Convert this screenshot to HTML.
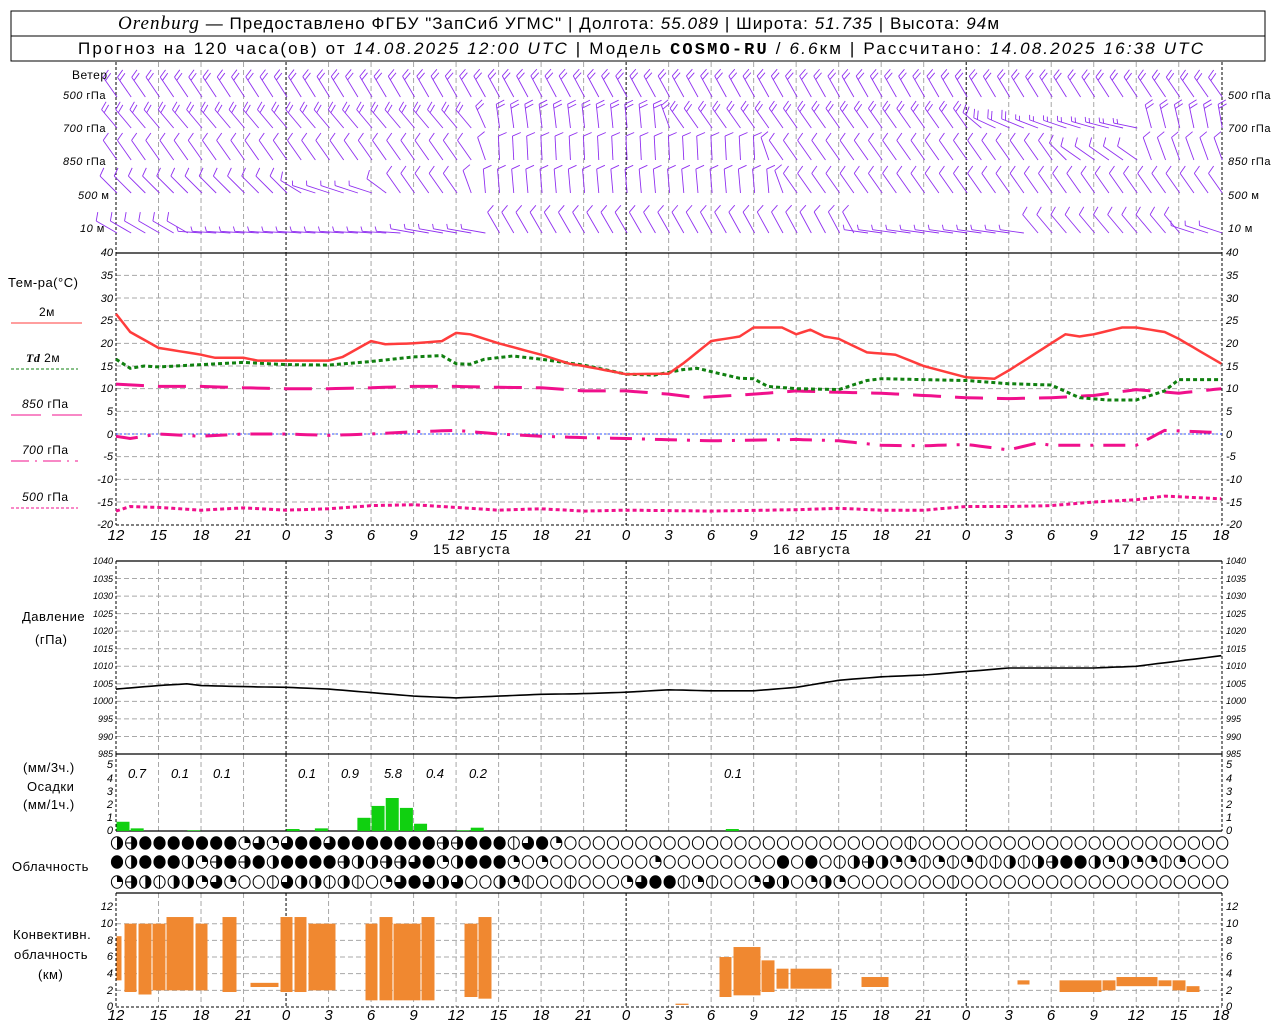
<!DOCTYPE html>
<html><head><meta charset="utf-8"><style>
html,body{margin:0;padding:0;background:#fff;width:1280px;height:1024px;overflow:hidden}
svg{display:block}
text{font-family:"Liberation Sans",sans-serif;fill:#000}
.h{font-size:17px;letter-spacing:1px}
.i{font-style:italic}
.s{font-size:12px;letter-spacing:0.5px}
.t{font-size:11px;font-style:italic}
.x{font-size:15px;font-style:italic;text-anchor:middle}
</style></head><body>
<svg id="g" width="1280" height="1024" viewBox="0 0 1280 1024" xmlns="http://www.w3.org/2000/svg">
<rect x="11" y="11" width="1254" height="50" fill="none" stroke="#000" stroke-width="1"/>
<line x1="11" y1="36" x2="1265" y2="36" stroke="#000"/>
<text class="h" x="118" y="29" textLength="882" lengthAdjust="spacing"><tspan font-family="Liberation Serif" font-style="italic" font-size="19">Orenburg</tspan> — Предоставлено ФГБУ "ЗапСиб УГМС" | Долгота: <tspan class="i">55.089</tspan> | Широта: <tspan class="i">51.735</tspan> | Высота: <tspan class="i">94</tspan>м</text>
<text class="h" x="78" y="54" font-size="16" textLength="1126" lengthAdjust="spacing">Прогноз на 120 часа(ов) от <tspan class="i">14.08.2025 12:00 UTC</tspan>  | Модель <tspan font-family="Liberation Mono" font-weight="bold">COSMO-RU</tspan> / <tspan class="i">6.6</tspan>км | Рассчитано: <tspan class="i">14.08.2025 16:38 UTC</tspan></text>
<g id="grid"></g>
<g id="data"></g>
<g class="s">
<text x="72" y="79">Ветер</text>
<text x="63" y="99" class="t">500 <tspan font-style="normal">гПа</tspan></text>
<text x="63" y="132" class="t">700 <tspan font-style="normal">гПа</tspan></text>
<text x="63" y="165" class="t">850 <tspan font-style="normal">гПа</tspan></text>
<text x="78" y="199" class="t">500 <tspan font-style="normal">м</tspan></text>
<text x="80" y="232" class="t">10  <tspan font-style="normal">  м</tspan></text>
<text x="1228" y="99" class="t">500 <tspan font-style="normal">гПа</tspan></text>
<text x="1228" y="132" class="t">700 <tspan font-style="normal">гПа</tspan></text>
<text x="1228" y="165" class="t">850 <tspan font-style="normal">гПа</tspan></text>
<text x="1228" y="199" class="t">500 <tspan font-style="normal">м</tspan></text>
<text x="1228" y="232" class="t">10  <tspan font-style="normal">  м</tspan></text>
<text x="8" y="287" style="font-size:13px">Тем-ра(°С)</text>
<text x="39" y="316">2м</text>
<text x="26" y="362"><tspan class="i" font-family="Liberation Serif" font-weight="bold">Td</tspan>  2м</text>
<text x="22" y="408"><tspan class="i">850</tspan> гПа</text>
<text x="22" y="454"><tspan class="i">700</tspan> гПа</text>
<text x="22" y="501"><tspan class="i">500</tspan> гПа</text>
<text x="22" y="621" style="font-size:13px">Давление</text>
<text x="35" y="644" style="font-size:13px">(гПа)</text>
<text x="23" y="772" style="font-size:13px">(мм/3ч.)</text>
<text x="27" y="791" style="font-size:13px">Осадки</text>
<text x="23" y="809" style="font-size:13px">(мм/1ч.)</text>
<text x="12" y="871" style="font-size:13px">Облачность</text>
<text x="13" y="939" style="font-size:13px">Конвективн.</text>
<text x="14" y="959" style="font-size:13px">облачность</text>
<text x="38" y="979" style="font-size:13px">(км)</text>
</g>
<g stroke-width="1">
<line x1="11" y1="323" x2="82" y2="323" stroke="#ff3c3c"/>
<line x1="11" y1="369" x2="78" y2="369" stroke="#108010" stroke-dasharray="3,2"/>
<line x1="11" y1="415" x2="41" y2="415" stroke="#f0108c"/><line x1="52" y1="415" x2="82" y2="415" stroke="#f0108c"/>
<line x1="11" y1="461" x2="78" y2="461" stroke="#f0108c" stroke-dasharray="18,6,2,6"/>
<line x1="11" y1="508" x2="78" y2="508" stroke="#f0108c" stroke-dasharray="3,2"/>
</g>
<g class="t" text-anchor="end">
<text x="113" y="256">40</text><text x="113" y="279">35</text><text x="113" y="302">30</text><text x="113" y="324">25</text><text x="113" y="347">20</text><text x="113" y="370">15</text><text x="113" y="392">10</text><text x="113" y="415">5</text><text x="113" y="438">0</text><text x="113" y="460">-5</text><text x="113" y="483">-10</text><text x="113" y="506">-15</text><text x="113" y="528">-20</text>
<text x="113" y="564" font-size="9">1040</text><text x="113" y="582" font-size="9">1035</text><text x="113" y="599" font-size="9">1030</text><text x="113" y="617" font-size="9">1025</text><text x="113" y="634" font-size="9">1020</text><text x="113" y="652" font-size="9">1015</text><text x="113" y="669" font-size="9">1010</text><text x="113" y="687" font-size="9">1005</text><text x="113" y="704" font-size="9">1000</text><text x="113" y="722" font-size="9">995</text><text x="113" y="740" font-size="9">990</text><text x="113" y="757" font-size="9">985</text>
<text x="113" y="768">5</text><text x="113" y="782">4</text><text x="113" y="795">3</text><text x="113" y="808">2</text><text x="113" y="821">1</text><text x="113" y="834">0</text>
<text x="113" y="910">12</text><text x="113" y="927">10</text><text x="113" y="944">8</text><text x="113" y="960">6</text><text x="113" y="977">4</text><text x="113" y="994">2</text><text x="113" y="1010">0</text>
</g>
<g class="t" text-anchor="start">
<text x="1226" y="256">40</text><text x="1226" y="279">35</text><text x="1226" y="302">30</text><text x="1226" y="324">25</text><text x="1226" y="347">20</text><text x="1226" y="370">15</text><text x="1226" y="392">10</text><text x="1226" y="415">5</text><text x="1226" y="438">0</text><text x="1226" y="460">-5</text><text x="1226" y="483">-10</text><text x="1226" y="506">-15</text><text x="1226" y="528">-20</text>
<text x="1226" y="564" font-size="9">1040</text><text x="1226" y="582" font-size="9">1035</text><text x="1226" y="599" font-size="9">1030</text><text x="1226" y="617" font-size="9">1025</text><text x="1226" y="634" font-size="9">1020</text><text x="1226" y="652" font-size="9">1015</text><text x="1226" y="669" font-size="9">1010</text><text x="1226" y="687" font-size="9">1005</text><text x="1226" y="704" font-size="9">1000</text><text x="1226" y="722" font-size="9">995</text><text x="1226" y="740" font-size="9">990</text><text x="1226" y="757" font-size="9">985</text>
<text x="1226" y="768">5</text><text x="1226" y="782">4</text><text x="1226" y="795">3</text><text x="1226" y="808">2</text><text x="1226" y="821">1</text><text x="1226" y="834">0</text>
<text x="1226" y="910">12</text><text x="1226" y="927">10</text><text x="1226" y="944">8</text><text x="1226" y="960">6</text><text x="1226" y="977">4</text><text x="1226" y="994">2</text><text x="1226" y="1010">0</text>
</g>
<g class="x">
<text x="116" y="540">12</text><text x="158.5" y="540">15</text><text x="201" y="540">18</text><text x="243.5" y="540">21</text><text x="286" y="540">0</text><text x="328.6" y="540">3</text><text x="371" y="540">6</text><text x="413.6" y="540">9</text><text x="456" y="540">12</text><text x="498.6" y="540">15</text><text x="541" y="540">18</text><text x="583.6" y="540">21</text><text x="626" y="540">0</text><text x="668.6" y="540">3</text><text x="711" y="540">6</text><text x="753.6" y="540">9</text><text x="796" y="540">12</text><text x="838.7" y="540">15</text><text x="881" y="540">18</text><text x="923.7" y="540">21</text><text x="966" y="540">0</text><text x="1008.7" y="540">3</text><text x="1051" y="540">6</text><text x="1093.7" y="540">9</text><text x="1136" y="540">12</text><text x="1178.7" y="540">15</text><text x="1221" y="540">18</text>
<text x="116" y="1020">12</text><text x="158.5" y="1020">15</text><text x="201" y="1020">18</text><text x="243.5" y="1020">21</text><text x="286" y="1020">0</text><text x="328.6" y="1020">3</text><text x="371" y="1020">6</text><text x="413.6" y="1020">9</text><text x="456" y="1020">12</text><text x="498.6" y="1020">15</text><text x="541" y="1020">18</text><text x="583.6" y="1020">21</text><text x="626" y="1020">0</text><text x="668.6" y="1020">3</text><text x="711" y="1020">6</text><text x="753.6" y="1020">9</text><text x="796" y="1020">12</text><text x="838.7" y="1020">15</text><text x="881" y="1020">18</text><text x="923.7" y="1020">21</text><text x="966" y="1020">0</text><text x="1008.7" y="1020">3</text><text x="1051" y="1020">6</text><text x="1093.7" y="1020">9</text><text x="1136" y="1020">12</text><text x="1178.7" y="1020">15</text><text x="1221" y="1020">18</text>
</g>
<g style="font-size:14px;letter-spacing:1px">
<text x="433" y="554">15  августа</text>
<text x="773" y="554">16  августа</text>
<text x="1113" y="554">17  августа</text>
</g>
<g class="i" font-size="13" text-anchor="middle">
<text x="137" y="778">0.7</text><text x="180" y="778">0.1</text><text x="222" y="778">0.1</text><text x="307" y="778">0.1</text><text x="350" y="778">0.9</text><text x="393" y="778">5.8</text><text x="435" y="778">0.4</text><text x="478" y="778">0.2</text><text x="733" y="778">0.1</text>
</g>
</svg>
<script>
(function(){
var NS="http://www.w3.org/2000/svg";
var grid=document.getElementById('grid'),data=document.getElementById('data');
function el(p,n,a){var e=document.createElementNS(NS,n);for(var k in a)e.setAttribute(k,a[k]);p.appendChild(e);return e;}
function X(h){return 116+14.17*h;}
var L=116,R=1222;
function hg(y){el(grid,'line',{x1:L,y1:y,x2:R,y2:y,stroke:'#a8a8a8','stroke-dasharray':'5,3'});}
for(var T=35;T>=-15;T-=5)hg(434-4.533*T);
for(var p=1035;p>=990;p-=5)hg(561+(1040-p)*3.509);
for(var k=10;k>=2;k-=2)hg(1007-8.33*k);
var panels=[[62,253],[253,525],[561,754],[754,831],[893,1007]];
for(var h=3;h<78;h+=3){var x=X(h),day=((12+h)%24==0);
 panels.forEach(function(pp){el(grid,'line',{x1:x,y1:pp[0],x2:x,y2:pp[1],stroke:day?'#000':'#a8a8a8','stroke-dasharray':day?'3,2':'5,3'});});}
[L,R].forEach(function(x){panels.forEach(function(pp){el(grid,'line',{x1:x,y1:pp[0],x2:x,y2:pp[1],stroke:'#000','stroke-dasharray':'3,2'});});});
[253,561,754,831,893].forEach(function(y){el(grid,'line',{x1:L,y1:y,x2:R,y2:y,stroke:'#000','stroke-width':1.2});});
el(grid,'line',{x1:L,y1:525,x2:R,y2:525,stroke:'#000','stroke-dasharray':'3,2'});
el(grid,'line',{x1:L,y1:1007,x2:R,y2:1007,stroke:'#000','stroke-dasharray':'3,2'});
el(grid,'line',{x1:L,y1:434,x2:R,y2:434,stroke:'#3050ff','stroke-dasharray':'2,2'});
function interp(pts,h){for(var i=0;i<pts.length-1;i++){if(h<=pts[i+1][0]){var a=pts[i],b=pts[i+1];return a[1]+(b[1]-a[1])*(h-a[0])/(b[0]-a[0]);}}return pts[pts.length-1][1];}
function curve(pts,fy,attrs){var d='';for(var h=0;h<=78;h+=0.5){d+=(h?'L':'M')+X(h).toFixed(1)+','+fy(interp(pts,h)).toFixed(1);}attrs.d=d;attrs.fill='none';el(data,'path',attrs);}
function ty(t){return 434-4.533*t;}
var T2=[[0,26.5],[1,22.5],[3,19],[6,17.5],[7,16.8],[9,16.8],[10,16.2],[15,16.2],[16,17],[18,20.5],[19,19.8],[21,20],[23,20.5],[24,22.3],[25,22],[27,20],[30,17.5],[32,15.5],[33,15],[36,13.2],[39,13.3],[40,15.5],[42,20.5],[44,21.5],[45,23.5],[47,23.5],[48,22],[49,23],[50,21.5],[51,21],[53,18],[55,17.5],[57,15],[60,12.5],[62,12.2],[63,14],[66,20],[67,22],[68,21.5],[69,22],[71,23.5],[72,23.5],[74,22.5],[75,21],[78,15.5]];
var TD=[[0,16.5],[1,14.5],[2,15],[3,14.8],[6,15.3],[9,15.8],[12,15.3],[15,15.2],[18,16],[21,17],[23,17.3],[24,15.5],[25,15.4],[26,16.5],[28,17.2],[30,16.5],[33,15.2],[36,13.2],[38,13],[40,14.2],[41,14.5],[44,12.3],[45,12.2],[46,10.5],[48,10],[51,9.8],[53,11.8],[54,12.2],[60,11.8],[63,11.1],[66,10.8],[68,8],[70,7.5],[72,7.5],[74,9.5],[75,12],[78,12]];
var T8=[[0,11],[3,10.5],[6,10.5],[9,10.2],[12,10],[15,10],[18,10.2],[21,10.5],[24,10.5],[27,10.3],[30,10.2],[33,9.5],[36,9.5],[39,8.8],[41,8],[45,8.8],[48,9.5],[51,9.2],[54,9],[57,8.5],[60,8],[63,7.8],[66,8],[69,8.5],[72,9.8],[75,9],[78,10]];
var T7=[[0,-0.5],[1,-1],[3,0],[6,-0.5],[9,0],[12,0],[15,-0.3],[18,0],[21,0.5],[24,0.8],[27,0],[30,-0.5],[33,-0.8],[36,-1],[42,-1.5],[48,-1.2],[51,-1.5],[54,-2.5],[57,-2.6],[60,-2.3],[63,-3.5],[65,-2],[66,-2.5],[69,-2.5],[72,-2.5],[74,0.8],[78,0.3]];
var T5=[[0,-17],[1,-16],[3,-16.2],[6,-16.8],[9,-16.3],[12,-16.8],[15,-16.5],[18,-15.8],[21,-15.6],[24,-16.2],[27,-16.8],[30,-16.5],[33,-17],[36,-16.8],[42,-17],[48,-16.7],[51,-16.4],[54,-16.8],[57,-16.8],[60,-16],[63,-16],[66,-15.8],[69,-15],[72,-14.5],[74,-13.7],[78,-14.3]];
curve(T5,ty,{stroke:'#f0108c','stroke-width':3,'stroke-dasharray':'4,3'});
curve(T7,ty,{stroke:'#f0108c','stroke-width':3,'stroke-dasharray':'22,10,3,10'});
curve(T8,ty,{stroke:'#f0108c','stroke-width':3,'stroke-dasharray':'28,14'});
curve(TD,ty,{stroke:'#108010','stroke-width':3,'stroke-dasharray':'4,3'});
curve(T2,ty,{stroke:'#ff3c3c','stroke-width':2.5});
var P=[[0,1003.5],[3,1004.5],[5,1005],[6,1004.5],[9,1004.2],[12,1004],[15,1003.5],[18,1002.5],[21,1001.5],[24,1001],[27,1001.5],[30,1002],[33,1002.2],[36,1002.6],[39,1003.3],[42,1003],[45,1003],[48,1004],[51,1006],[54,1007],[57,1007.5],[60,1008.5],[63,1009.5],[66,1009.5],[69,1009.5],[72,1010],[75,1011.5],[78,1013]];
curve(P,function(p){return 561+(1040-p)*3.509;},{stroke:'#000','stroke-width':1.6});
var pr=[[0,0.7],[1,0.2],[5,0.05],[12,0.15],[14,0.2],[17,1.0],[18,1.9],[19,2.5],[20,1.75],[21,0.55],[24,0.05],[25,0.25],[43,0.15]];
pr.forEach(function(b){var hgt=b[1]*13.2;el(data,'rect',{x:X(b[0])+0.5,y:831-hgt,width:13,height:hgt,fill:'#10d010'});});
var cv=[[116,122,3.2,8.5],[124,137,1.8,10],[138,152,1.5,10],[152,166,2,10],[166,194,2,10.8],[195,208,2,10],[222,237,1.8,10.8],[250,279,2.4,2.9],[280,293,1.8,10.8],[294,307,1.8,10.8],[308,336,2,10],[365,378,0.8,10],[379,393,0.8,10.8],[393,421,0.8,10],[421,435,0.8,10.8],[464,478,1.2,10],[478,492,1,10.8],[675,689,0.25,0.4],[719,732,1.2,6],[733,761,1.4,7.2],[761,775,1.8,5.6],[776,789,2.2,4.6],[790,832,2.2,4.6],[861,889,2.4,3.6],[1017,1030,2.7,3.2],[1059,1102,1.8,3.2],[1102,1116,2,3.2],[1116,1158,2.5,3.6],[1158,1172,2.5,3.2],[1172,1186,2,3.2],[1186,1200,1.8,2.5]];
cv.forEach(function(c){var y1=1007-8.33*c[3],y2=1007-8.33*c[2];el(data,'rect',{x:c[0]+0.5,y:y1,width:c[1]-c[0]-1,height:y2-y1,fill:'#f08830'});});
function pad(s,n){while(s.length<n)s+='0';return s;}
function setc(s,i,c){return s.substr(0,i)+c+s.substr(i+1);}
var r1=pad('Hhfffffffqtqtfftfffffffhhfffvtfq',79);r1=setc(r1,56,'v');
var r2=pad('fHfffHqhfhfHffffhHHhhtfqHfffq0q0',38)+'q00000000f0f0vHhHqqvqvqvvHvHhffHqHqqvq000';r2=pad(r2,79);
var r3=pad('qhHvHHqtq00vtHHvHv0qtftHt00Hqv00v000',36)+'qtffvqv00qtH0qHq';r3=pad(r3,79);r3=setc(r3,59,'v');
function circ(cx,cy,t){var r=5.6;var g=el(data,'g',{});var ry=r+0.7;
 el(g,'ellipse',{cx:cx,cy:cy,rx:r,ry:ry,fill:t=='f'?'#000':'#fff',stroke:'#000','stroke-width':1});
 if(t=='H')el(g,'path',{d:'M'+cx+','+(cy-ry)+'A'+r+','+ry+' 0 0 1 '+cx+','+(cy+ry)+'Z',fill:'#000'});
 if(t=='q')el(g,'path',{d:'M'+cx+','+cy+'L'+cx+','+(cy-ry)+'A'+r+','+ry+' 0 0 1 '+(cx+r)+','+cy+'Z',fill:'#000'});
 if(t=='t')el(g,'path',{d:'M'+cx+','+cy+'L'+cx+','+(cy-ry)+'A'+r+','+ry+' 0 1 1 '+(cx-r)+','+cy+'Z',fill:'#000'});
 if(t=='v')el(g,'line',{x1:cx,y1:cy-ry,x2:cx,y2:cy+ry,stroke:'#000'});
 if(t=='h'){el(g,'line',{x1:cx-r,y1:cy,x2:cx+r,y2:cy,stroke:'#000'});el(g,'path',{d:'M'+cx+','+(cy-ry)+'A'+r+','+ry+' 0 0 1 '+cx+','+(cy+ry)+'Z',fill:'#000'});}
}
[[r1,843],[r2,862],[r3,882]].forEach(function(rr){for(var i=0;i<79;i++)circ(X(i)+1,rr[1],rr[0].charAt(i));});
var rows=[
 {y:97,n:2,phi:[[0,-35],[30,-28],[60,-30],[78,-35]]},
 {y:128,n:2,phi:[[0,-40],[25,-40],[27,-8],[38,-5],[40,-35],[60,-35],[62,-65],[72,-78],[73,-15],[78,-10]]},
 {y:160,n:1,phi:[[0,-35],[25,-35],[27,-3],[45,-3],[47,-35],[66,-35],[68,-55],[72,-55],[73,-20],[78,-20]]},
 {y:193,n:1,phi:[[0,-45],[12,-45],[14,-72],[18,-72],[20,-35],[24,-35],[26,-5],[46,-5],[48,-35],[78,-35]]},
 {y:233,n:1,phi:[[0,-60],[5,-60],[6,-86],[20,-86],[21,-80],[26,-80],[27,-30],[35,-30],[36,-30],[52,-28],[53,-82],[64,-82],[65,-40],[75,-40],[76,-72],[78,-72]]}
];
var wc='#9030f0';
rows.forEach(function(rw){for(var h=0;h<=78;h++){var phi=interp(rw.phi,h)*Math.PI/180;var x0=X(h)+1,y0=rw.y,Lg=24;
 var dx=Math.sin(phi),dy=-Math.cos(phi);var x1=x0+dx*Lg,y1=y0+dy*Lg;
 el(data,'line',{x1:x0,y1:y0,x2:x1,y2:y1,stroke:wc,'stroke-width':0.9});
 var bphi=phi+70*Math.PI/180;var bl=Math.abs(phi)>1.2?5:9;
 for(var b=0;b<rw.n;b++){var sx=x1-dx*4*b,sy=y1-dy*4*b;
  el(data,'line',{x1:sx,y1:sy,x2:sx+Math.sin(bphi)*bl,y2:sy-Math.cos(bphi)*bl,stroke:wc,'stroke-width':0.9});}
}});
})();
</script>
</body></html>
